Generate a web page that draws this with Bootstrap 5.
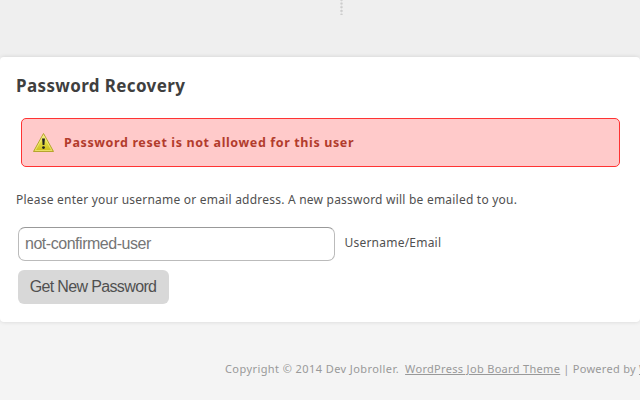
<!DOCTYPE html>
<html lang="en">
<head>
<meta charset="utf-8">
<meta name="viewport" content="width=device-width, initial-scale=1">
<title>Password Recovery</title>
<link rel="stylesheet" href="https://cdn.jsdelivr.net/npm/bootstrap@5.3.0/dist/css/bootstrap.min.css">
<style>
body{font-family:"Noto Sans",sans-serif;font-size:12px;line-height:18px;color:#505050;background:#f4f4f4;height:400px}
.top-strip{height:57px;background:#efefef;padding-left:340px}
.dots{width:3px;height:15px;background:radial-gradient(circle at 50% 50%,#ccc 0 .8px,transparent 1.6px) 0 -2px/3px 3.7px}
.panel{height:265px;padding:17px 16px 0;border-radius:4px;box-shadow:0 0 4px rgba(0,0,0,.13)}
.panel h1{font-size:17px;line-height:24px;font-weight:700;color:#3f3f3f;letter-spacing:.37px}
.notice{width:599px;height:49px;margin:20px 0 0 4.5px;padding:0 11.5px;background:#ffcaca;border:1.5px solid #f33;border-radius:5px;color:#b23c2c;gap:8px}
.notice strong{font-size:12.5px;letter-spacing:.62px}
.notice svg{width:23px;height:22px}
.intro{margin-top:24px;letter-spacing:.22px}
.field.form-control{width:317px;height:34px;padding:0 6.5px;border:1px solid #bbb;border-top-color:#999;border-radius:7px;color:#757575;font:16px "Liberation Sans",Arial,sans-serif;letter-spacing:-.47px}
.form-row{margin:18px 0 0 1.5px;gap:10px}
.form-row label{letter-spacing:.22px;position:relative;top:-1px}
.submit.btn{width:151px;height:34px;margin:9px 0 0 1.5px;padding:0;border:0;border-radius:6px;background:#d8d8d8;color:#505050;font:16px "Liberation Sans",Arial,sans-serif;letter-spacing:-.64px}
footer{height:78px;padding:38px 0 0 225px;font-size:11px;color:#999;letter-spacing:.42px}
footer a{color:#999}
.theme{letter-spacing:.32px}
.copy{margin-right:6px}.divider{margin:0 3px}
.powered{letter-spacing:.3px}
.vendor{margin-left:3px}
</style>
<script src="https://cdn.jsdelivr.net/npm/bootstrap@5.3.0/dist/js/bootstrap.bundle.min.js"></script>
</head>
<body class="overflow-hidden">
<div class="top-strip"><div class="dots"></div></div>
<main class="panel bg-white position-relative">
<h1 class="mb-0">Password Recovery</h1>
<div class="notice d-flex align-items-center" role="alert">
<svg viewBox="0 0 23 22" aria-hidden="true"><defs><linearGradient id="g" x2="0" y2="1"><stop stop-color="#f6ef9a"/><stop offset=".5" stop-color="#e3dc42"/><stop offset="1" stop-color="#cbbb18"/></linearGradient></defs><path d="M10.5 1.5 20.5 19.5H.5Z" fill="url(#g)" stroke="#b5a52e" stroke-linejoin="round"/><path d="M10.5 3.5 18.8 18.5H2.2Z" fill="none" stroke="#f5ee86" stroke-width=".7"/><path d="M9.1 6.5h2.8l-.5 6.5H9.6Z" fill="#222"/><circle cx="10.5" cy="15.6" r="1.45" fill="#222"/></svg>
<strong>Password reset is not allowed for this user</strong>
</div>
<p class="intro mb-0 text-nowrap">Please enter your username or email address. A new password will be emailed to you.</p>
<form>
<div class="form-row d-flex align-items-center">
<input id="user" class="field form-control" type="text" value="not-confirmed-user">
<label for="user">Username/Email</label>
</div>
<button class="submit btn" type="button">Get New Password</button>
</form>
</main>
<footer class="d-flex text-nowrap overflow-hidden"><span class="copy">Copyright © 2014 Dev Jobroller.</span><a href="#" class="theme">WordPress Job Board Theme</a><span class="divider">|</span><span class="powered">Powered by</span><a href="#" class="vendor">W</a></footer>
</body>
</html>
